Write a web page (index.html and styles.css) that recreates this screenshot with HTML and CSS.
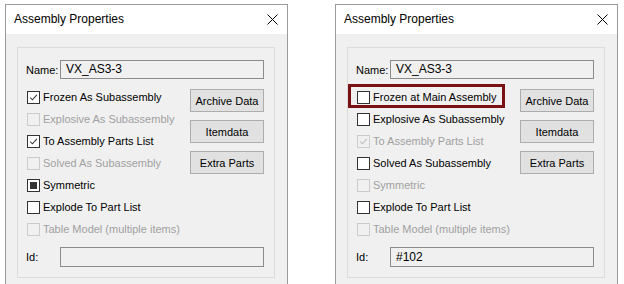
FILE: index.html
```html
<!doctype html>
<html lang="en">
<head>
    <meta charset="UTF-8">
    <title>Assembly Properties</title>
    <link rel="stylesheet" href="styles.css">
</head>
<body>
<div class="page">
    <section class="dialog">
        <header class="titlebar">
            <span class="title">Assembly Properties</span>
            <svg class="close" width="11" height="11" viewBox="0 0 11 11"><path d="M0.5 0.5 L10.5 10.5 M10.5 0.5 L0.5 10.5" stroke="#000" stroke-width="1"/></svg>
        </header>
        <div class="client">
            <div class="group">
                <div class="field">
                    <span class="label">Name:</span>
                    <div class="textbox">VX_AS3-3</div>
                </div>
                <div class="middle">
                    <ul class="checks">
                        <li class="check"><span class="box"><svg viewBox="0 0 13 13"><path d="M2.5 6.5 L5.2 9.3 L10.5 3.3" fill="none" stroke="#333" stroke-width="1.2"/></svg></span>Frozen As Subassembly</li>
                        <li class="check disabled"><span class="box"></span>Explosive As Subassembly</li>
                        <li class="check"><span class="box"><svg viewBox="0 0 13 13"><path d="M2.5 6.5 L5.2 9.3 L10.5 3.3" fill="none" stroke="#333" stroke-width="1.2"/></svg></span>To Assembly Parts List</li>
                        <li class="check disabled"><span class="box"></span>Solved As Subassembly</li>
                        <li class="check"><span class="box"><i class="mixed"></i></span>Symmetric</li>
                        <li class="check"><span class="box"></span>Explode To Part List</li>
                        <li class="check disabled"><span class="box"></span>Table Model (multiple items)</li>
                    </ul>
                    <div class="buttons">
                        <button class="btn">Archive Data</button>
                        <button class="btn">Itemdata</button>
                        <button class="btn">Extra Parts</button>
                    </div>
                </div>
                <div class="field id-field">
                    <span class="label">Id:</span>
                    <div class="textbox tall"></div>
                </div>
            </div>
        </div>
    </section>

    <section class="dialog">
        <header class="titlebar">
            <span class="title">Assembly Properties</span>
            <svg class="close" width="11" height="11" viewBox="0 0 11 11"><path d="M0.5 0.5 L10.5 10.5 M10.5 0.5 L0.5 10.5" stroke="#000" stroke-width="1"/></svg>
        </header>
        <div class="client">
            <div class="group">
                <div class="field">
                    <span class="label">Name:</span>
                    <div class="textbox">VX_AS3-3</div>
                </div>
                <div class="middle">
                    <ul class="checks">
                        <li class="check marked"><span class="box"></span>Frozen at Main Assembly</li>
                        <li class="check"><span class="box"></span>Explosive As Subassembly</li>
                        <li class="check disabled"><span class="box"><svg viewBox="0 0 13 13"><path d="M2.5 6.5 L5.2 9.3 L10.5 3.3" fill="none" stroke="#bcbcbc" stroke-width="1.2"/></svg></span>To Assembly Parts List</li>
                        <li class="check"><span class="box"></span>Solved As Subassembly</li>
                        <li class="check disabled"><span class="box"></span>Symmetric</li>
                        <li class="check"><span class="box"></span>Explode To Part List</li>
                        <li class="check disabled"><span class="box"></span>Table Model (multiple items)</li>
                    </ul>
                    <div class="buttons">
                        <button class="btn">Archive Data</button>
                        <button class="btn">Itemdata</button>
                        <button class="btn">Extra Parts</button>
                    </div>
                </div>
                <div class="field id-field">
                    <span class="label">Id:</span>
                    <div class="textbox tall">#102</div>
                </div>
            </div>
        </div>
    </section>
</div>
</body>
</html>
```

FILE: styles.css
```css
body {
    margin: 0;
    background: #ffffff;
    font-family: 'Liberation Sans', Arial, sans-serif;
    font-size: 11px;
    color: #000000;
    overflow: hidden;
}
.page {
    display: flex;
    gap: 47px;
    padding: 4px 0 0 5px;
}
.dialog {
    width: 283px;
    height: 280px;
    box-sizing: border-box;
    border: 1px solid #9a9a9a;
    border-bottom: none;
    background: #f0f0f0;
    display: flex;
    flex-direction: column;
}
.titlebar {
    height: 29px;
    background: #ffffff;
    display: flex;
    align-items: center;
    justify-content: space-between;
    padding: 0 9px 0 8px;
}
.title {
    font-family: 'Liberation Sans', Arial, sans-serif;
    font-size: 12px;
    margin-top: -2px;
}
.close {
    display: block;
    margin-top: -1px;
}
.client {
    padding: 13px 12px 0 11px;
}
.group {
    border: 1px solid #dcdcdc;
    padding: 12px 10px 10px 8px;
}
.field {
    display: flex;
    align-items: center;
}
.label {
    width: 34px;
    flex-shrink: 0;
}
.textbox {
    flex: 1;
    height: 19px;
    box-sizing: border-box;
    border: 1px solid #8c8c8c;
    background: #f0f0f0;
    padding: 0 5px;
    line-height: 17px;
    font-size: 12px;
}
.textbox.tall {
    height: 20px;
    line-height: 18px;
}
.middle {
    display: grid;
    grid-template-columns: 1fr 74px;
    margin-top: 7px;
}
.checks {
    list-style: none;
    margin: 0;
    padding: 0 0 0 1px;
    min-width: 0;
}
.check {
    position: relative;
    height: 22px;
    display: flex;
    align-items: center;
    gap: 3px;
    white-space: nowrap;
}
.box {
    width: 13px;
    height: 13px;
    flex-shrink: 0;
    box-sizing: border-box;
    border: 1px solid #333333;
    background: #ffffff;
    display: flex;
    align-items: center;
    justify-content: center;
}
.box svg {
    width: 11px;
    height: 11px;
}
.mixed {
    width: 7px;
    height: 7px;
    background: #333333;
}
.check.disabled {
    color: #a0a0a0;
}
.check.disabled .box {
    border-color: #cccccc;
    background: #f0f0f0;
}
.marked::after {
    content: "";
    position: absolute;
    left: -9px;
    top: -2px;
    width: 157px;
    height: 24px;
    box-sizing: border-box;
    border: 3px solid #7a1012;
}
.buttons {
    display: flex;
    flex-direction: column;
    gap: 8px;
    margin-top: 3px;
}
.btn {
    width: 74px;
    height: 23px;
    border: 1px solid #adadad;
    background: #e1e1e1;
    font-family: 'Liberation Sans', Arial, sans-serif;
    font-size: 11px;
    color: #000000;
    padding: 0;
}
.id-field {
    margin-top: 7px;
}
```
